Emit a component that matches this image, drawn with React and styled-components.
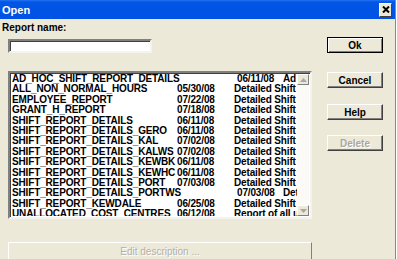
import React from "react";
import styled, { createGlobalStyle } from "styled-components";

const reports = [
    { name: "AD_HOC_SHIFT_REPORT_DETAILS", date: "06/11/08", desc: "Ad hoc shift report", wide: true },
    { name: "ALL_NON_NORMAL_HOURS", date: "05/30/08", desc: "Detailed Shift Report" },
    { name: "EMPLOYEE_REPORT", date: "07/22/08", desc: "Detailed Shift Report" },
    { name: "GRANT_H_REPORT", date: "07/18/08", desc: "Detailed Shift Report" },
    { name: "SHIFT_REPORT_DETAILS", date: "06/11/08", desc: "Detailed Shift Report" },
    { name: "SHIFT_REPORT_DETAILS_GERO", date: "06/11/08", desc: "Detailed Shift Report" },
    { name: "SHIFT_REPORT_DETAILS_KAL", date: "07/02/08", desc: "Detailed Shift Report" },
    { name: "SHIFT_REPORT_DETAILS_KALWS", date: "07/02/08", desc: "Detailed Shift Report" },
    { name: "SHIFT_REPORT_DETAILS_KEWBK", date: "06/11/08", desc: "Detailed Shift Report" },
    { name: "SHIFT_REPORT_DETAILS_KEWHC", date: "06/11/08", desc: "Detailed Shift Report" },
    { name: "SHIFT_REPORT_DETAILS_PORT", date: "07/03/08", desc: "Detailed Shift Report" },
    { name: "SHIFT_REPORT_DETAILS_PORTWS", date: "07/03/08", desc: "Detailed Shift Report", wide: true },
    { name: "SHIFT_REPORT_KEWDALE", date: "06/25/08", desc: "Detailed Shift Report" },
    { name: "UNALLOCATED_COST_CENTRES", date: "06/12/08", desc: "Report of all unallocated" },
];

export default function App() {
    return (
        <>
            <GlobalStyle />
            <Window>
                <TitleBar>
                    <Title>Open</Title>
                    <CloseButton>
                        <svg width="8" height="7" viewBox="0 0 8 7">
                            <path d="M1 0.5 L7 6.5 M7 0.5 L1 6.5" stroke="#000" strokeWidth="2" />
                        </svg>
                    </CloseButton>
                </TitleBar>
                <Body>
                    <LeftColumn>
                        <Label>Report name:</Label>
                        <NameInput />
                        <ListBox>
                            <Rows>
                                {reports.map((r) => (
                                    <Row key={r.name} $wide={r.wide}>
                                        <Cell>{r.name}</Cell>
                                        <Cell>{r.date}</Cell>
                                        <Cell>{r.desc}</Cell>
                                    </Row>
                                ))}
                            </Rows>
                            <ScrollBar>
                                <ArrowButton>
                                    <svg width="7" height="4" viewBox="0 0 7 4">
                                        <path d="M0 4 L3.5 0 L7 4 Z" fill="#a8a8a8" />
                                    </svg>
                                </ArrowButton>
                                <Track />
                                <ArrowButton>
                                    <svg width="7" height="4" viewBox="0 0 7 4">
                                        <path d="M0 0 L3.5 4 L7 0 Z" fill="#a8a8a8" />
                                    </svg>
                                </ArrowButton>
                            </ScrollBar>
                        </ListBox>
                        <EditButton>Edit description ...</EditButton>
                    </LeftColumn>
                    <RightColumn>
                        <Button $default>Ok</Button>
                        <Button $gap={19}>Cancel</Button>
                        <Button $gap={16}>Help</Button>
                        <Button $gap={15} $disabled>Delete</Button>
                    </RightColumn>
                </Body>
            </Window>
        </>
    );
}

const GlobalStyle = createGlobalStyle`
    html, body {
        margin: 0;
        padding: 0;
        background: #ffffff;
    }
    body {
        font-family: "Liberation Sans", Arial, sans-serif;
    }
`;

const Window = styled.div`
    width: 395px;
    height: 259px;
    display: flex;
    flex-direction: column;
    background: #ece9d8;
    border-right: 1px solid #8c8a80;
    overflow: hidden;
`;

const TitleBar = styled.div`
    height: 19px;
    display: flex;
    align-items: center;
    justify-content: space-between;
    padding: 0 3px 0 2px;
    background: linear-gradient(#2a72f0 0, #0056e6 2px, #0052e4 100%);
    flex-shrink: 0;
`;

const Title = styled.span`
    color: #ffffff;
    font-size: 11px;
    font-weight: bold;
`;

const CloseButton = styled.div`
    width: 13px;
    height: 14px;
    box-sizing: border-box;
    display: flex;
    align-items: center;
    justify-content: center;
    background: #ece9d8;
    border: 1px solid;
    border-color: #ffffff #404040 #404040 #ffffff;
`;

const Body = styled.div`
    flex: 1;
    display: flex;
    gap: 15px;
    padding: 3px 0 0 2px;
`;

const LeftColumn = styled.div`
    display: flex;
    flex-direction: column;
    width: 310px;
`;

const Label = styled.div`
    font-size: 10px;
    font-weight: bold;
    line-height: 12px;
    color: #000;
`;

const Sunken = styled.div`
    box-sizing: border-box;
    background: #ffffff;
    border: 2px solid;
    border-color: #808080 #f4f3ee #f4f3ee #808080;
    box-shadow: inset 1px 1px 0 #404040;
`;

const NameInput = styled(Sunken)`
    margin: 5px 0 0 6px;
    width: 144px;
    height: 14px;
`;

const ListBox = styled(Sunken)`
    margin: 18px 0 0 6px;
    width: 304px;
    height: 148px;
    display: flex;
    padding: 1px 1px 1px 2px;
`;

const Rows = styled.div`
    flex: 1;
    overflow: hidden;
    padding-top: 0;
`;

const Row = styled.div`
    display: grid;
    grid-template-columns: ${(p) => (p.$wide ? "225px 46px 1fr" : "165px 57px 1fr")};
    height: 10.4px;
    line-height: 10.4px;
    font-size: 10px;
    font-weight: bold;
    color: #000;
    white-space: nowrap;
    letter-spacing: -0.15px;
`;

const Cell = styled.span`
    overflow: hidden;
`;

const ScrollBar = styled.div`
    width: 12px;
    display: flex;
    flex-direction: column;
`;

const ArrowButton = styled.div`
    height: 11px;
    box-sizing: border-box;
    display: flex;
    align-items: center;
    justify-content: center;
    background: #ece9d8;
    border: 1px solid;
    border-color: #ffffff #808080 #808080 #ffffff;
`;

const Track = styled.div`
    flex: 1;
    background: #fbfaf6;
`;

const EditButton = styled.div`
    margin: 23px 0 0 6px;
    width: 304px;
    height: 22px;
    box-sizing: border-box;
    display: flex;
    align-items: center;
    justify-content: center;
    font-size: 10px;
    color: #b4b0a4;
    text-shadow: 1px 1px 0 #ffffff;
    border: 1px solid;
    border-color: #ffffff #808080 #808080 #ffffff;
    padding-bottom: 4px;
`;

const RightColumn = styled.div`
    display: flex;
    flex-direction: column;
    padding-top: 15px;
`;

const Button = styled.div`
    width: 56px;
    height: 16px;
    box-sizing: border-box;
    margin-top: ${(p) => p.$gap || 0}px;
    display: flex;
    align-items: center;
    justify-content: center;
    font-size: 10px;
    font-weight: bold;
    color: ${(p) => (p.$disabled ? "#aca899" : "#000")};
    text-shadow: ${(p) => (p.$disabled ? "1px 1px 0 #ffffff" : "none")};
    background: #ece9d8;
    border: 1px solid;
    border-color: ${(p) => (p.$default ? "#000" : "#ffffff #404040 #404040 #ffffff")};
    box-shadow: ${(p) =>
        p.$default
            ? "inset 1px 1px 0 #ffffff, inset -1px -1px 0 #808080"
            : "inset -1px -1px 0 #808080"};
`;
